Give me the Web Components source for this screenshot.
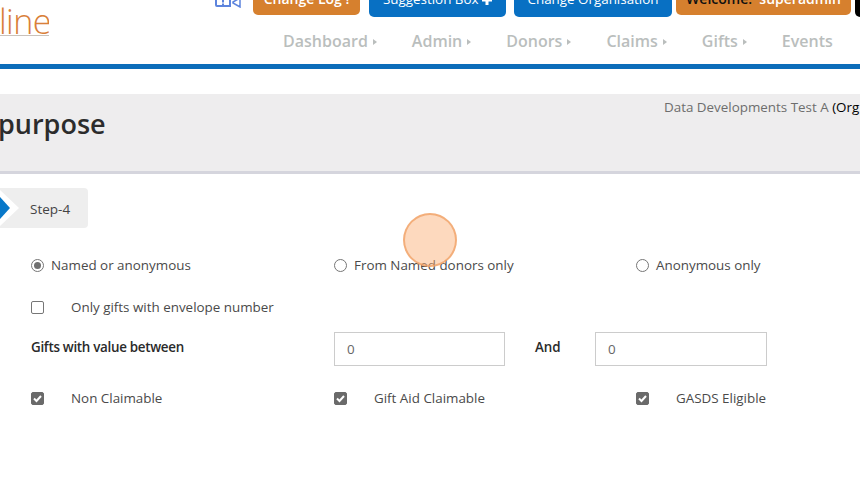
<!DOCTYPE html>
<html><head><meta charset="utf-8">
<style>
html,body{margin:0;padding:0;height:481px;overflow:hidden;background:#fff;font-family:"Open Sans",sans-serif}
</style></head><body>
<template id="t-hdr"><style>
:host{display:block;height:64px;position:relative;overflow:hidden}
.logo{position:absolute;left:-1px;top:1px;font:300 34px/40px "Open Sans",sans-serif;color:#d9803a;border-bottom:1px solid #c9c2bc;height:34px;width:50px;letter-spacing:-.6px;overflow:hidden}
.top{display:flex;align-items:flex-start;height:17px;padding-left:215px}
.cam{flex:none;width:26px;height:8px;margin-right:12px;overflow:hidden}
.cam svg{display:block}
.btns{display:flex;align-items:flex-start;margin-top:-12px;flex:none}
nav{display:flex;height:47px;align-items:center;padding:0 0 0 283px;font:600 16px/20px "Open Sans",sans-serif;color:#babebd;white-space:nowrap}
</style>
<div class="logo">line</div>
<div class="top"><div class="cam"><svg width="26" height="8" viewBox="0 0 26 8"><path d="M1-6H14a1 1 0 0 1 1 1V6H2a1 1 0 0 1-1-1Z" fill="none" stroke="#5d84dd" stroke-width="2"/><path d="M18 2L25-2V7L18 3Z" fill="none" stroke="#5d84dd" stroke-width="1.500"/><path d="M8 0v2.500M8 3.500v1.500" stroke="#5d84dd" stroke-width="2"/></svg></div>
<div class="btns"><slot></slot></div></div>
<nav><slot name="nav"></slot></nav>
</template>
<template id="t-btn"><style>
:host{display:block;flex:none;box-sizing:border-box;height:var(--h,29px);padding-top:1px;background:var(--bg,#0870c3);color:var(--fg,#fff);font:var(--w,400) var(--fs,13.4px)/20px "Open Sans",sans-serif;text-align:center;white-space:nowrap;overflow:hidden;width:var(--width);margin-right:var(--mr,8px);border-radius:5px}
</style><slot></slot></template>
<template id="t-nav"><style>
:host{display:inline-flex;align-items:center;margin-right:var(--mr,0)}
i{display:block;margin:2px 0 0 5px;width:0;height:0;border:3.5px solid transparent;border-left:4px solid #babebd;border-right:0}
</style><slot></slot><i></i></template>
<template id="t-bar"><style>
:host{display:block;height:5px;background:#0c6dba;margin-bottom:25px}
</style></template>
<template id="t-title"><style>
:host{display:block;position:relative;box-sizing:border-box;height:80px;background:#eeedee;border-bottom:3px solid #d5d5dd;overflow:hidden}
h1{margin:0;padding:11px 0 0 0;font:600 27px/37px "Open Sans",sans-serif;color:#2c2c2c;transform:translateX(-2px)}
.org{position:absolute;right:0;top:4px;left:664px;font:400 13.4px/18px "Open Sans",sans-serif;color:#6d6d6d;white-space:nowrap}
</style><h1><slot></slot></h1><div class="org"><slot name="org"></slot></div></template>
<template id="t-step"><style>
:host{display:flex;align-items:center;box-sizing:border-box;width:88px;height:40px;margin-top:14px;background:#eee;border-radius:0 4px 4px 0;padding:2px 0 0 30px;font:400 13.5px/18px "Open Sans",sans-serif;color:#444;position:relative;overflow:hidden}
svg{position:absolute;left:0;top:0}
</style><svg width="20" height="40" viewBox="0 0 20 40"><path d="M0 2L19 20 0 38Z" fill="#fff"/><path d="M0 9L10 20 0 31Z" fill="#0878c9"/></svg><slot></slot></template>
<template id="t-grid"><style>
:host{display:grid;grid-template-columns:303px 302px 1fr;padding:28px 0 0 31px;font:400 13.4px/18px "Open Sans",sans-serif;color:#4a4a4a}
</style><slot></slot></template>
<template id="t-radio"><style>
:host{display:flex;align-items:center;height:18px;gap:7px;white-space:nowrap}
.r{box-sizing:border-box;width:13px;height:13px;border-radius:50%;border:1px solid #767676;background:#fff;position:relative}
:host([checked]) .r::after{content:"";position:absolute;left:2px;top:2px;width:7px;height:7px;border-radius:50%;background:#6f6f6f}
</style><span class="r"></span><slot></slot></template>
<template id="t-check"><style>
:host{display:flex;align-items:center;height:18px;gap:27px;white-space:nowrap}
.c{box-sizing:border-box;width:13px;height:13px;border-radius:2px;border:1px solid #767676;background:#fff;display:block;flex:none}
:host([checked]) .c{background:#6a6a6a;border-color:#6a6a6a}
svg{display:none;width:11px;height:11px}
:host([checked]) svg{display:block}
</style><span class="c"><svg viewBox="0 0 11 11"><path d="M2 5.500L4.500 8 9 3" fill="none" stroke="#fff" stroke-width="2"/></svg></span><slot></slot></template>
<template id="t-value"><style>
:host{display:flex;align-items:center;grid-column:1/-1;height:34px;margin:16px 0 23px 0;font:400 13.4px/18px "Open Sans",sans-serif;color:#4a4a4a}
.l{width:303px;font-weight:600;color:#2a2a2a;letter-spacing:-.3px;margin-bottom:5px}
.b{box-sizing:border-box;width:171px;height:34px;border:1px solid #ccc;padding:0 12px;line-height:32px;color:#666}
.a{width:90px;padding-left:30px;box-sizing:border-box;font-weight:600;color:#2a2a2a;margin-bottom:5px}
.b2{width:172px}
</style><span class="l"><slot></slot></span><span class="b">0</span><span class="a">And</span><span class="b b2">0</span></template>
<template id="t-click"><style>
:host{display:block;position:absolute;left:403px;top:213px;width:54px;height:54px;box-sizing:border-box;border-radius:50%;background:rgba(250,170,110,.45);border:2px solid rgba(240,160,100,.75)}
</style></template>

<x-header>
 <x-btn style="--bg:#d6802e;--width:107px;--w:600;--fs:14px;--fg:#fff;--h:27px;--mr:9px">Change Log !</x-btn>
 <x-btn style="--width:137px">Suggestion Box <svg width="10" height="10" viewBox="0 0 10 10" style="vertical-align:-1px"><path d="M5 0v10M0 5h10" stroke="#fff" stroke-width="3"/></svg></x-btn>
 <x-btn style="--width:158px;--mr:4px">Change Organisation</x-btn>
 <x-btn style="--bg:#d6802e;--width:175px;--w:600;--fs:14px;--fg:#111;--h:27px;--mr:4px">Welcome: <span style="color:#fff">&nbsp;superadmin</span></x-btn>
 <x-btn style="--bg:#000;--width:20px;--mr:0;--h:29px"></x-btn>
 <x-nav slot="nav" style="--mr:35px">Dashboard</x-nav>
 <x-nav slot="nav" style="--mr:35px">Admin</x-nav>
 <x-nav slot="nav" style="--mr:35px">Donors</x-nav>
 <x-nav slot="nav" style="--mr:35px">Claims</x-nav>
 <x-nav slot="nav" style="--mr:35px">Gifts</x-nav>
 <span slot="nav">Events</span>
</x-header>
<x-bar></x-bar>
<x-title>purpose<span slot="org">Data Developments Test A <span style="color:#000">(Org</span></span></x-title>
<x-step>Step-4</x-step>
<x-grid>
 <x-radio checked>Named or anonymous</x-radio><x-radio>From Named donors only</x-radio><x-radio>Anonymous only</x-radio>
 <x-check style="grid-column:1/-1;margin-top:24px">Only gifts with envelope number</x-check>
 <x-value>Gifts with value between</x-value>
 <x-check checked>Non Claimable</x-check><x-check checked>Gift Aid Claimable</x-check><x-check checked>GASDS Eligible</x-check>
</x-grid>
<x-click></x-click>
<script>
for (const [n,t] of Object.entries({'x-header':'t-hdr','x-btn':'t-btn','x-nav':'t-nav','x-bar':'t-bar','x-title':'t-title','x-step':'t-step','x-grid':'t-grid','x-radio':'t-radio','x-check':'t-check','x-value':'t-value','x-click':'t-click'})) {
  customElements.define(n, class extends HTMLElement {
    constructor(){super();this.attachShadow({mode:'open'}).append(document.getElementById(t).content.cloneNode(true));}
  });
}
</script>
</body></html>
